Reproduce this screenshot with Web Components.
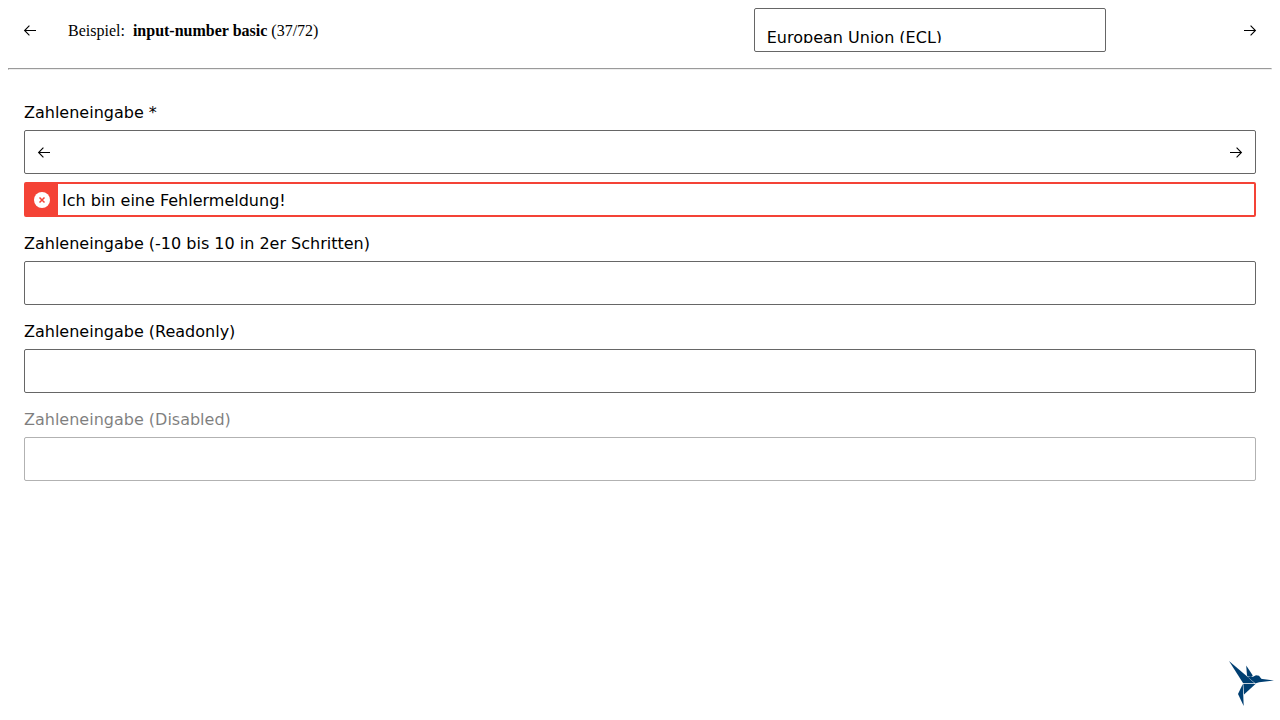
<!DOCTYPE html>
<html lang="de">
<head>
<meta charset="utf-8">
<title>input-number basic</title>
<style>
body { margin: 8px; background: #fff; color: #000; font: 16px/20px "Liberation Serif", "Times New Roman", serif; }
</style>
</head>
<body>
<sample-app></sample-app>
<script>
const define = (name, html, setup) => customElements.define(name, class extends HTMLElement {
  connectedCallback() {
    if (this.shadowRoot) return;
    this.attachShadow({ mode: 'open' }).innerHTML = html;
    if (setup) setup(this, this.shadowRoot);
  }
});

define('arrow-icon', `
<style>
:host { display: block; width: 14px; height: 14px; }
:host([direction="right"]) svg { transform: scaleX(-1); }
svg { display: block; }
</style>
<svg width="14" height="14" viewBox="0 0 14 14" fill="none" stroke="currentColor" stroke-width="1.100" aria-hidden="true"><path d="M13 7.500H2M6.400 2.700L1.600 7.500L6.400 12.300"/></svg>`);

define('nav-button', `
<style>
:host { display: block; flex: none; }
button { display: grid; place-items: center; width: 44px; height: 44px; margin: 0; padding: 0; border: 0; background: none; color: #000; }
</style>
<button type="button"><arrow-icon></arrow-icon></button>`, (host, root) => {
  root.querySelector('arrow-icon').setAttribute('direction', host.getAttribute('direction'));
  root.querySelector('button').setAttribute('aria-label', host.getAttribute('label'));
});

define('theme-select', `
<style>
:host { display: block; box-sizing: border-box; height: 44px; padding: 8px 12px; border: 1px solid #666; border-radius: 2px; }
div { height: 26px; overflow: hidden; }
select { appearance: none; display: block; width: 100%; height: 42px; margin: 0; padding: 9px 0; border: 0; background: none; color: #000; font: 16px/24px Verdana, "DejaVu Sans", sans-serif; outline: 0; }
</style>
<div><select aria-label="Theme"><option>European Union (ECL)</option></select></div>`);

define('sample-header', `
<style>
:host { display: block; }
header { display: grid; grid-template-columns: 44px 1fr 1fr 44px; column-gap: 16px; align-items: center; }
theme-select { width: calc(100% * 5 / 8); justify-self: center; }
p { margin: 0; padding-top: 2px; }
b { margin-left: 4px; }
hr { margin: 16px 0 0; }
</style>
<header>
<nav-button direction="left" label="Zurück"></nav-button>
<p>Beispiel: <b>input-number basic</b> (37/72)</p>
<theme-select></theme-select>
<nav-button direction="right" label="Weiter"></nav-button>
</header>
<hr>`);

define('error-message', `
<style>
:host { display: flex; box-sizing: border-box; height: 35px; margin-top: 2px; border: 2px solid #f44336; border-radius: 2px; background: #fff; }
.icon { display: grid; place-items: center; width: 32px; background: #f44336; }
.text { padding: 2px 4px 0; align-self: center; }
svg { display: block; }
</style>
<div class="icon"><svg width="16" height="16" viewBox="0 0 16 16" aria-hidden="true"><circle cx="8" cy="8" r="8" fill="#fff"/><path d="M5.500 5.500l5 5M10.500 5.500l-5 5" stroke="#f44336" stroke-width="1.500"/></svg></div>
<div class="text" role="alert"><slot></slot></div>`);

define('number-field', `
<style>
:host { display: flex; flex-direction: column; gap: 6px; }
:host([disabled]) label, :host([disabled]) .box { opacity: .5; }
label { line-height: 22px; }
.box { display: flex; align-items: center; box-sizing: border-box; height: 44px; padding: 0 12px; border: 1px solid #666; border-radius: 2px; }
input { flex: 1; min-width: 0; height: 40px; margin: 0; padding: 0; border: 0; outline: 0; background: none; font: inherit; appearance: textfield; }
input::-webkit-inner-spin-button { appearance: none; }
</style>
<label for="field"></label>
<div class="box"><slot name="start"></slot><input id="field" type="number"><slot name="end"></slot></div>
<slot></slot>`, (host, root) => {
  root.querySelector('label').textContent = host.getAttribute('label');
  const input = root.querySelector('input');
  for (const name of ['min', 'max', 'step', 'readonly', 'disabled', 'required'])
    if (host.hasAttribute(name)) input.setAttribute(name, host.getAttribute(name));
});

define('bird-logo', `
<style>
:host { display: block; position: fixed; right: 5px; bottom: 13px; width: 46px; height: 46px; }
svg { display: block; }
</style>
<svg width="46" height="46" viewBox="0 0 46 46" fill="#003f72" role="img" aria-label="Logo">
<path d="M0 0L17 14.500L25.500 22.300L14 22Z"/>
<path d="M17.200 4.500L23.800 14.500L22 16L18 14.800Z"/>
<path d="M18 15.400L24 15.800L27 14.200L30 14.800L32.500 18L31 20.500L26.500 22.400Z"/>
<path d="M31.500 17.800L45 19.500L28 21.500Z"/>
<path d="M14.300 22.700L26.500 22.900L15 33.500Z"/>
<path d="M13.800 23L14.700 45L9 33Z"/>
</svg>`);

define('sample-app', `
<style>
:host { display: block; }
main { display: flex; flex-direction: column; gap: 16px; padding: 32px 16px; font: 16px/20px Verdana, "DejaVu Sans", sans-serif; }
</style>
<sample-header></sample-header>
<main>
<number-field label="Zahleneingabe *" required><arrow-icon slot="start" direction="left"></arrow-icon><arrow-icon slot="end" direction="right"></arrow-icon><error-message>Ich bin eine Fehlermeldung!</error-message></number-field>
<number-field label="Zahleneingabe (-10 bis 10 in 2er Schritten)" min="-10" max="10" step="2"></number-field>
<number-field label="Zahleneingabe (Readonly)" readonly></number-field>
<number-field label="Zahleneingabe (Disabled)" disabled></number-field>
</main>
<bird-logo></bird-logo>`);
</script>
</body>
</html>
